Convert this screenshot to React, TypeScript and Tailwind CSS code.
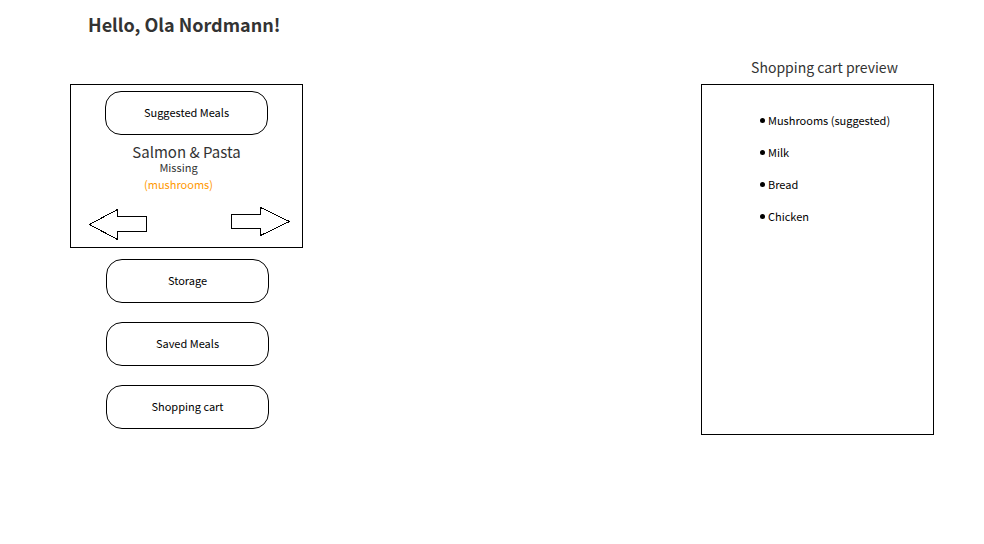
import type { ReactNode } from 'react';

const cartItems = ['Mushrooms (suggested)', 'Milk', 'Bread', 'Chicken'];
const pages = ['Storage', 'Saved Meals', 'Shopping cart'];

function PillButton({ children }: { children: ReactNode }) {
  return (
    <button
      type="button"
      className="h-11 w-[163px] rounded-[16px] border border-black bg-white pb-0.5 text-[11px] leading-4 text-black"
    >
      {children}
    </button>
  );
}

function ArrowButton({ label, points }: { label: string; points: string }) {
  return (
    <button type="button" aria-label={label}>
      <svg width="59" height="34" viewBox="0 0 59 34" className="block" shapeRendering="crispEdges">
        <polygon points={points} fill="white" stroke="black" strokeWidth="1" />
      </svg>
    </button>
  );
}

export default function App() {
  return (
    <div className="min-h-screen bg-white pr-[50px] pb-8 pl-[70px] font-['Noto_Sans_CJK_SC',sans-serif] text-[#333333]">
      <header className="pt-2.5 pl-[18px]">
        <h1 className="text-[18px] leading-7 font-bold">Hello, Ola Nordmann!</h1>
      </header>

      <main className="flex justify-between pt-[18px]">
        <div className="w-[233px] pt-7">
          <section className="flex flex-col items-center border border-black pt-1.5 pb-[7px]">
            <PillButton>Suggested Meals</PillButton>
            <h2 className="mt-2.5 text-[15px] leading-[14px]">Salmon &amp; Pasta</h2>
            <div className="pr-4 text-center text-[11px] leading-[17px]">
              <p>Missing</p>
              <p className="text-[#ff9900]">(mushrooms)</p>
            </div>
            <div className="mt-[13px] flex w-full justify-between pr-3 pl-[18px]">
              <ArrowButton
                label="Previous meal"
                points="0.5,18.5 28.5,3.5 28.5,10.5 57.5,10.5 57.5,25.5 28.5,25.5 28.5,33.5"
              />
              <ArrowButton
                label="Next meal"
                points="58.5,15.5 29.5,1.5 29.5,8.5 0.5,8.5 0.5,22.5 29.5,22.5 29.5,29.5"
              />
            </div>
          </section>

          <nav className="mt-[11px] flex flex-col items-start gap-[19px] pl-9">
            {pages.map((page) => (
              <PillButton key={page}>{page}</PillButton>
            ))}
          </nav>
        </div>

        <aside className="w-[233px]">
          <h2 className="h-7 pl-3.5 text-center text-[14px] leading-[22px]">Shopping cart preview</h2>
          <div className="min-h-[351px] border border-black pt-[27px] pl-[58px]">
            <ul className="flex flex-col gap-4 text-[11px] leading-4 text-black">
              {cartItems.map((item) => (
                <li key={item} className="flex items-center gap-[3px]">
                  <span className="size-[5px] rounded-full bg-black" />
                  {item}
                </li>
              ))}
            </ul>
          </div>
        </aside>
      </main>
    </div>
  );
}
